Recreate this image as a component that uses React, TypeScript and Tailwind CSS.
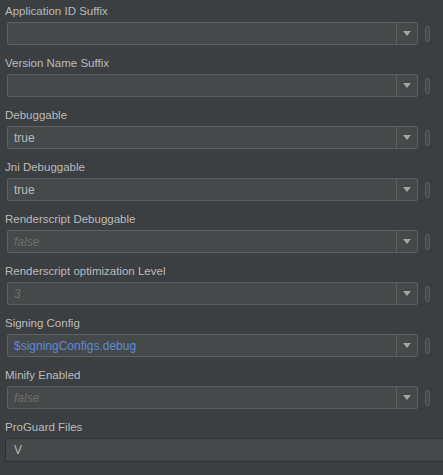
import React from 'react';

type Field = {
    label: string;
    value?: string;
    kind?: 'normal' | 'hint' | 'link';
};

const fields: Field[] = [
    { label: 'Application ID Suffix' },
    { label: 'Version Name Suffix' },
    { label: 'Debuggable', value: 'true' },
    { label: 'Jni Debuggable', value: 'true' },
    { label: 'Renderscript Debuggable', value: 'false', kind: 'hint' },
    { label: 'Renderscript optimization Level', value: '3', kind: 'hint' },
    { label: 'Signing Config', value: '$signingConfigs.debug', kind: 'link' },
    { label: 'Minify Enabled', value: 'false', kind: 'hint' },
];

const valueClass = (kind: Field['kind']): string => {
    switch (kind) {
        case 'hint': return 'italic text-[#6e6e6e]';
        case 'link': return 'text-[#5d8ad8]';
        default: return 'text-[#bbbbbb]';
    }
};

const ComboRow: React.FC<{ field: Field }> = ({ field }) => (
    <div className="flex flex-col">
        <div className="h-[22px] pl-[5px] pt-[4px] text-[11.5px] leading-[14px] text-[#bbbbbb]">
            {field.label}
        </div>
        <div className="flex items-center h-[23px]">
            <div className="ml-[7px] w-[411px] h-[23px] flex border border-[#5e6060] rounded-[2px] bg-[#45494a]">
                <div className={`flex-1 flex items-center pl-[6px] text-[12px] ${valueClass(field.kind)}`}>
                    {field.value}
                </div>
                <div className="w-[21px] flex items-center justify-center border-l border-[#5e6060]">
                    <svg width="8" height="5" viewBox="0 0 8 5">
                        <path d="M0 0 L8 0 L4 5 Z" fill="#a6a6a6" />
                    </svg>
                </div>
            </div>
            <div className="ml-[7px] w-[5px] h-[16px] rounded-full border border-[#5e6060] bg-[#45494a]" />
        </div>
    </div>
);

const App: React.FC = () => {
    return (
        <div
            className="w-[443px] h-[475px] overflow-hidden bg-[#3c3f41]"
            style={{ fontFamily: '"Liberation Sans", Arial, sans-serif' }}
        >
            <div className="flex flex-col gap-[7px]">
                {fields.map(f => (
                    <ComboRow key={f.label} field={f} />
                ))}
                <div className="flex flex-col">
                    <div className="h-[22px] pl-[5px] pt-[4px] text-[11.5px] leading-[14px] text-[#bbbbbb]">
                        ProGuard Files
                    </div>
                    <div className="ml-[5px] h-[24px] flex items-center pl-[8px] border-y border-l border-[#2f3133] bg-[#45494a] text-[12px] text-[#bbbbbb]">
                        V
                    </div>
                </div>
            </div>
        </div>
    );
};

export default App;
